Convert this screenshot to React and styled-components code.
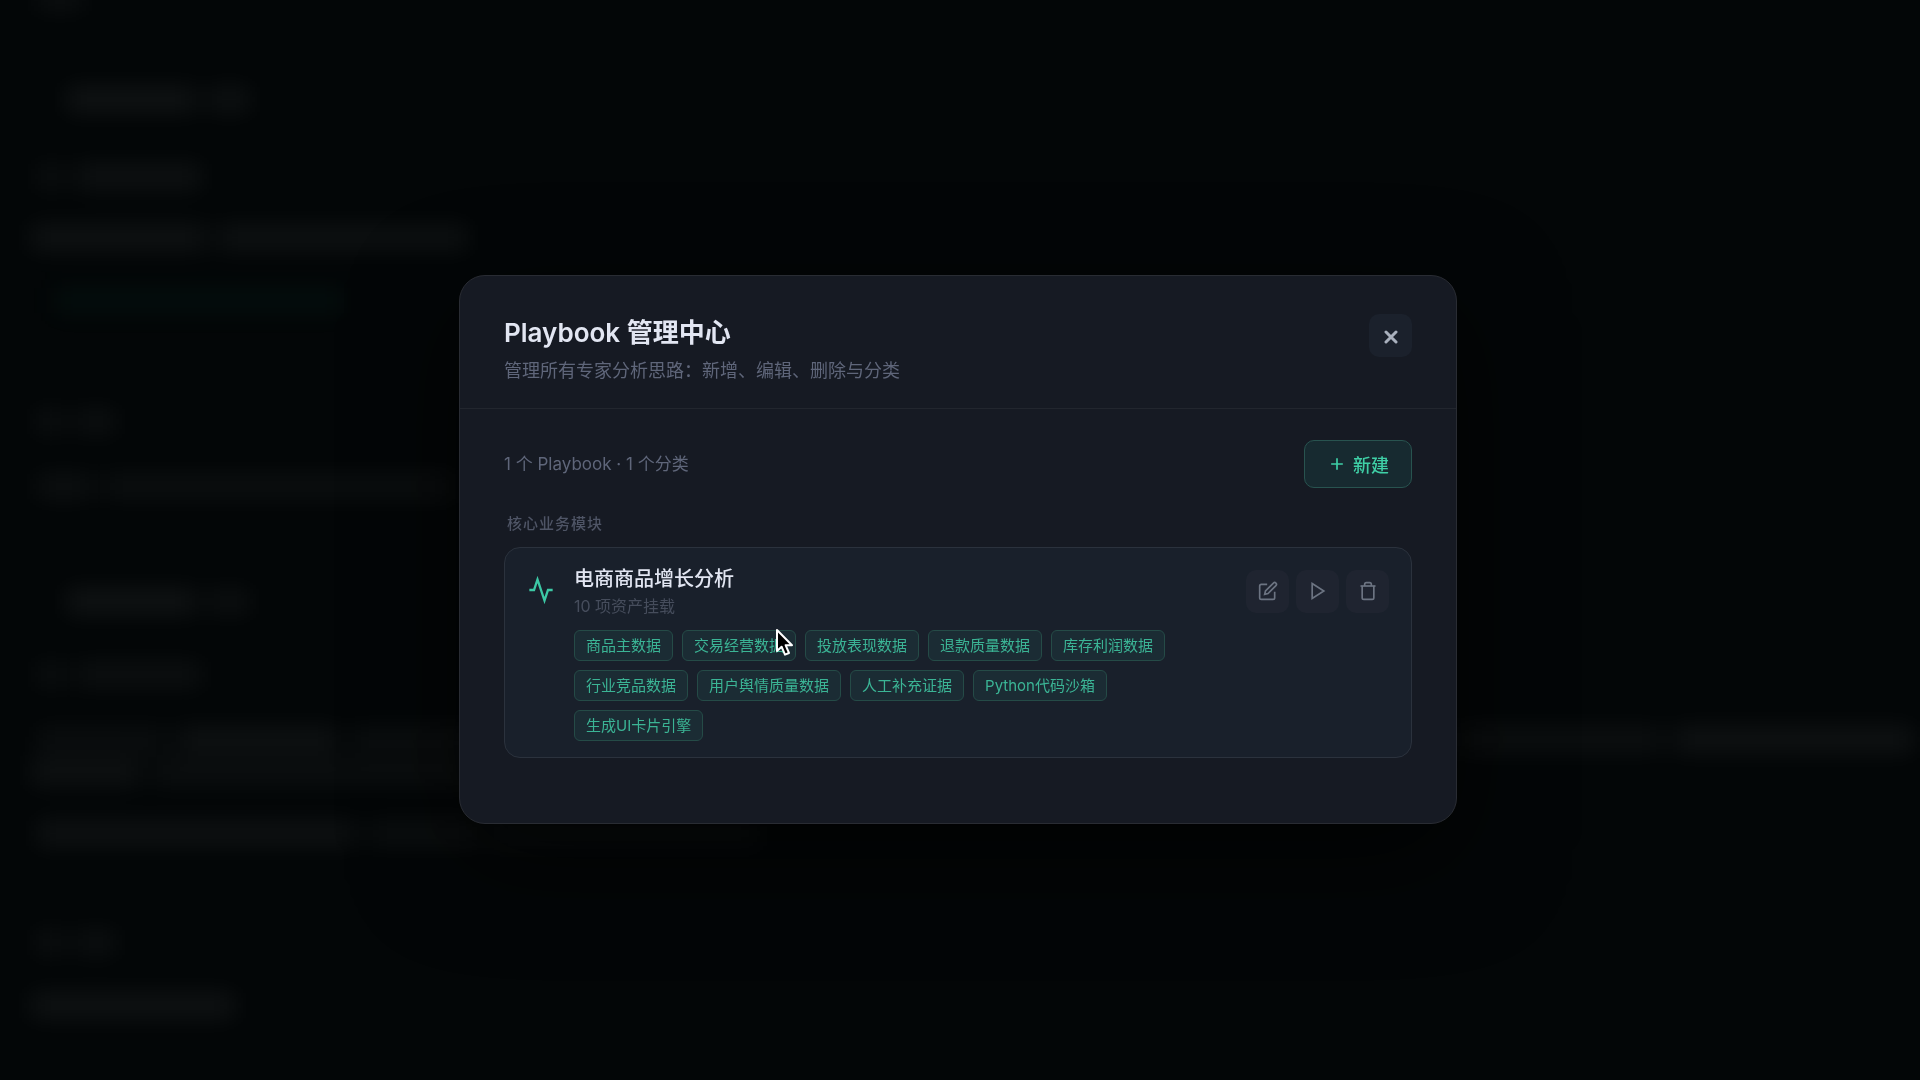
import React from "react";
import styled, { createGlobalStyle } from "styled-components";

const categories = [
  {
    name: "核心业务模块",
    playbooks: [
      {
        title: "电商商品增长分析",
        meta: "10 项资产挂载",
        tags: [
          "商品主数据",
          "交易经营数据",
          "投放表现数据",
          "退款质量数据",
          "库存利润数据",
          "行业竞品数据",
          "用户舆情质量数据",
          "人工补充证据",
          "Python代码沙箱",
          "生成UI卡片引擎",
        ],
      },
    ],
  },
];

// Out-of-focus lines of the page behind the dialog: [width, strength] runs
const backdropLines = [
  { space: 0, indent: 6, runs: [[48, 0.04]] },
  { space: 76, indent: 36, runs: [[130, 0.06], [42, 0.05]] },
  { space: 52, indent: 6, runs: [[28, 0.04], [126, 0.05]] },
  { space: 36, indent: 0, runs: [[176, 0.055], [250, 0.05]] },
  { space: 38, indent: 24, green: true, runs: [[290, 0.045]] },
  { space: 96, indent: 6, runs: [[28, 0.045], [40, 0.045]] },
  { space: 40, indent: 6, runs: [[56, 0.045], [350, 0.04]] },
  { space: 90, indent: 36, runs: [[130, 0.06], [42, 0.045]] },
  { space: 48, indent: 6, runs: [[28, 0.04], [126, 0.045]] },
  {
    space: 40,
    indent: 6,
    runs: [[130, 0.035], [160, 0.05], [1100, 0.04], [200, 0.045], [240, 0.055]],
  },
  { space: 8, indent: 0, runs: [[110, 0.05], [320, 0.04]] },
  { space: 36, indent: 6, runs: [[320, 0.05], [110, 0.04], [270, 0.035]] },
  { space: 84, indent: 6, runs: [[28, 0.045], [40, 0.045]] },
  { space: 38, indent: 0, runs: [[205, 0.055]] },
];

function ActivityIcon() {
  return (
    <svg width="28" height="28" viewBox="0 0 24 24" fill="none" stroke="currentColor" strokeWidth="2">
      <polyline points="22 12 18 12 15 21 9 3 6 12 2 12" />
    </svg>
  );
}

function ActionIcon({ children }) {
  return (
    <svg
      width="20"
      height="20"
      viewBox="0 0 24 24"
      fill="none"
      stroke="currentColor"
      strokeWidth="2"
    >
      {children}
    </svg>
  );
}

function PlaybookCard({ playbook }) {
  return (
    <Card>
      <CardIcon>
        <ActivityIcon />
      </CardIcon>
      <CardBody>
        <CardTitle>{playbook.title}</CardTitle>
        <CardMeta>{playbook.meta}</CardMeta>
        <TagList>
          {playbook.tags.map((tag) => (
            <Tag key={tag}>{tag}</Tag>
          ))}
        </TagList>
      </CardBody>
      <Actions>
        <IconButton type="button" aria-label="编辑">
          <ActionIcon>
            <path d="M11 4H4a2 2 0 0 0-2 2v14a2 2 0 0 0 2 2h14a2 2 0 0 0 2-2v-7" />
            <path d="M18.5 2.5a2.121 2.121 0 0 1 3 3L12 15l-4 1 1-4 9.5-9.5z" />
          </ActionIcon>
        </IconButton>
        <IconButton type="button" aria-label="运行">
          <ActionIcon>
            <polygon points="5 3 19 12 5 21 5 3" />
          </ActionIcon>
        </IconButton>
        <IconButton type="button" aria-label="删除">
          <ActionIcon>
            <polyline points="3 6 5 6 21 6" />
            <path d="M19 6v14a2 2 0 0 1-2 2H7a2 2 0 0 1-2-2V6m3 0V4a2 2 0 0 1 2-2h4a2 2 0 0 1 2 2v2" />
          </ActionIcon>
        </IconButton>
      </Actions>
    </Card>
  );
}

function App() {
  return (
    <>
      <GlobalStyle />
      <Backdrop aria-hidden="true">
        {backdropLines.map((line, i) => (
          <BlurLine key={i} $space={line.space} $indent={line.indent}>
            {line.runs.map(([width, strength], j) => (
              <BlurRun key={j} $green={line.green} style={{ width, opacity: strength }} />
            ))}
          </BlurLine>
        ))}
      </Backdrop>
      <Overlay>
        <Dialog role="dialog" aria-labelledby="dialog-title">
          <Header>
            <div>
              <Title id="dialog-title">Playbook 管理中心</Title>
              <Subtitle>管理所有专家分析思路：新增、编辑、删除与分类</Subtitle>
            </div>
            <CloseButton type="button" aria-label="关闭">
              <svg width="14" height="14" viewBox="0 0 14 14" fill="none" stroke="currentColor" strokeWidth="3" strokeLinecap="round">
                <path d="M2 2l10 10M12 2L2 12" />
              </svg>
            </CloseButton>
          </Header>
          <Content>
            <Toolbar>
              <Count>1 个 Playbook · 1 个分类</Count>
              <CreateButton type="button">
                <svg width="20" height="20" viewBox="0 0 24 24" fill="none" stroke="currentColor" strokeWidth="2">
                  <path d="M12 5v14M5 12h14" />
                </svg>
                新建
              </CreateButton>
            </Toolbar>
            {categories.map((category) => (
              <section key={category.name}>
                <CategoryName>{category.name}</CategoryName>
                {category.playbooks.map((playbook) => (
                  <PlaybookCard key={playbook.title} playbook={playbook} />
                ))}
              </section>
            ))}
          </Content>
        </Dialog>
      </Overlay>
      <Cursor width="20" height="30" viewBox="0 0 20 30" aria-hidden="true">
        <path
          d="M2 2v21l4.600-4.300 3.400 8 4-1.700-3.400-7.800h6.400z"
          fill="#000"
          stroke="#fff"
          strokeWidth="2"
          strokeLinejoin="round"
        />
      </Cursor>
    </>
  );
}

export default App;

const GlobalStyle = createGlobalStyle`
  * {
    box-sizing: border-box;
  }
  body {
    margin: 0;
    background: #030607;
    font-family: Inter, "Noto Sans CJK SC", sans-serif;
    overflow: hidden;
  }
  button {
    font-family: inherit;
    cursor: pointer;
  }
`;

const Backdrop = styled.div`
  position: fixed;
  inset: -14px 0 0;
  padding-left: 30px;
  overflow: hidden;
  filter: blur(12px);
`;

const BlurLine = styled.div`
  display: flex;
  gap: 12px;
  margin-top: ${(props) => props.$space}px;
  padding-left: ${(props) => props.$indent}px;
`;

const BlurRun = styled.div`
  flex-shrink: 0;
  height: 25px;
  background: ${(props) => (props.$green ? "#34d399" : "#fff")};
`;

const Overlay = styled.div`
  position: fixed;
  inset: 0;
  display: flex;
  align-items: center;
  justify-content: center;
  padding: 18px 4px 0 0;
`;

const Dialog = styled.div`
  width: 90%;
  max-width: 998px;
  background: #161a23;
  border: 1px solid #292c33;
  border-radius: 26px;
  box-shadow: 0 32px 104px rgba(0, 0, 0, 0.7);
`;

const Header = styled.header`
  display: flex;
  justify-content: space-between;
  align-items: flex-start;
  padding: 38px 44px 23px;
  border-bottom: 1px solid #22262e;
`;

const Title = styled.h2`
  margin: 0;
  color: #e2e6f2;
  font-size: 26px;
  font-weight: 600;
  line-height: 38px;
`;

const Subtitle = styled.p`
  margin: 5px 0 0;
  color: #5f667a;
  font-size: 18px;
  line-height: 28px;
`;

const CloseButton = styled.button`
  display: flex;
  align-items: center;
  justify-content: center;
  width: 43px;
  height: 43px;
  padding: 4px 0 0;
  color: #a9b0bd;
  background: #1b212c;
  border: none;
  border-radius: 10px;
`;

const Content = styled.div`
  padding: 31px 44px 65px;
`;

const Toolbar = styled.div`
  display: flex;
  justify-content: space-between;
  align-items: center;
`;

const Count = styled.span`
  color: #5f667a;
  font-size: 17px;
  line-height: 24px;
`;

const CreateButton = styled.button`
  display: flex;
  align-items: center;
  gap: 6px;
  height: 48px;
  padding: 0 22px;
  color: #3fcfa6;
  background: #172a30;
  border: 1px solid #28534f;
  border-radius: 10px;
  font-size: 18px;
  font-weight: 500;
`;

const CategoryName = styled.h3`
  margin: 24px 0 11px;
  padding-left: 3px;
  color: #4f5566;
  font-size: 15px;
  font-weight: 500;
  line-height: 24px;
  letter-spacing: 1px;
`;

const Card = styled.article`
  display: flex;
  align-items: flex-start;
  gap: 19px;
  padding: 16px 22px;
  background: #19202b;
  border: 1px solid #2b323d;
  border-radius: 16px;
`;

const CardIcon = styled.div`
  display: flex;
  align-items: center;
  height: 43px;
  margin-top: 5px;
  color: #3cc8a5;
`;

const CardBody = styled.div`
  flex: 1;
`;

const CardTitle = styled.h4`
  margin: 0;
  color: #e2e6f2;
  font-size: 20px;
  font-weight: 500;
  line-height: 30px;
`;

const CardMeta = styled.p`
  margin: 0;
  color: #464d5c;
  font-size: 16px;
  line-height: 24px;
`;

const TagList = styled.ul`
  display: flex;
  flex-wrap: wrap;
  gap: 9px;
  margin: 12px 0 0;
  padding: 0;
  list-style: none;
`;

const Tag = styled.li`
  padding: 0 11px;
  color: #3bb495;
  background: #1b2c34;
  border: 1px solid #254b47;
  border-radius: 6px;
  font-size: 15px;
  line-height: 29px;
`;

const Actions = styled.div`
  display: flex;
  gap: 7px;
  margin-top: 6px;
`;

const IconButton = styled.button`
  display: flex;
  align-items: center;
  justify-content: center;
  width: 43px;
  height: 43px;
  padding: 0;
  color: #6c7482;
  background: #1f2430;
  border: none;
  border-radius: 10px;
`;

const Cursor = styled.svg`
  position: absolute;
  left: 775px;
  top: 628px;
`;
